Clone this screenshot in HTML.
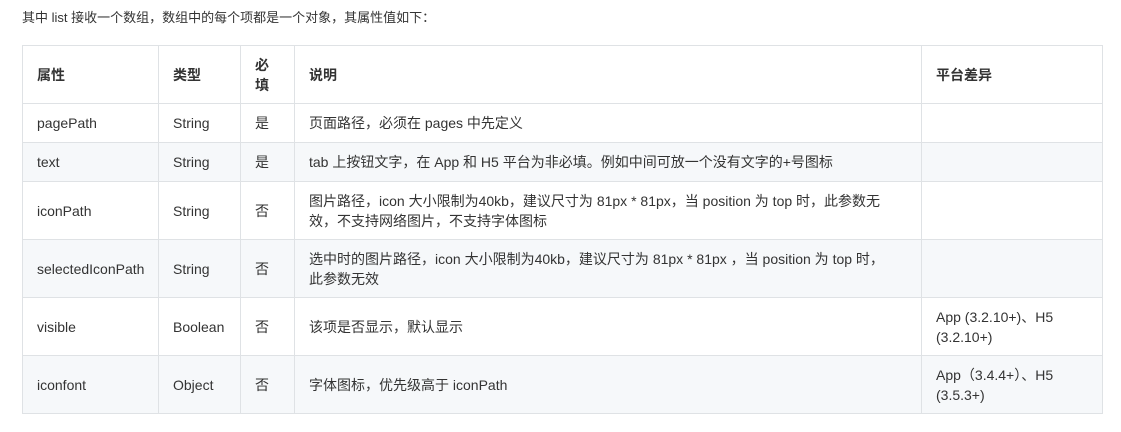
<!DOCTYPE html>
<html><head><meta charset="utf-8"><style>
body{margin:0;background:#fff;font-family:"Liberation Sans","Noto Sans CJK SC",sans-serif;font-size:13px;color:#333;}
p{position:absolute;left:22px;top:8px;margin:0;line-height:20px;}
table{position:absolute;left:22px;top:45px;border-collapse:collapse;table-layout:fixed;width:1080px;font-size:14px;}
td,th{border:1px solid #dfe2e5;padding:0 14px;line-height:20px;text-align:left;vertical-align:middle;overflow:hidden;white-space:nowrap;}
th{font-weight:bold;height:57px;}
tr.g td{background:#f6f8fa;}
tr.s td{height:38px;}
tr.d td{height:57px;}
</style></head><body>
<p>其中 list 接收一个数组，数组中的每个项都是一个对象，其属性值如下：</p>
<table>
<colgroup><col style="width:136px"><col style="width:82px"><col style="width:54px"><col style="width:627px"><col style="width:181px"></colgroup>
<tr><th>属性</th><th>类型</th><th>必<br>填</th><th>说明</th><th>平台差异</th></tr>
<tr class="s"><td>pagePath</td><td>String</td><td>是</td><td>页面路径，必须在 pages 中先定义</td><td></td></tr>
<tr class="s g"><td>text</td><td>String</td><td>是</td><td>tab 上按钮文字，在 App 和 H5 平台为非必填。例如中间可放一个没有文字的+号图标</td><td></td></tr>
<tr class="d"><td>iconPath</td><td>String</td><td>否</td><td>图片路径，icon 大小限制为40kb，建议尺寸为 81px * 81px，当 position 为 top 时，此参数无<br>效，不支持网络图片，不支持字体图标</td><td></td></tr>
<tr class="d g"><td>selectedIconPath</td><td>String</td><td>否</td><td>选中时的图片路径，icon 大小限制为40kb，建议尺寸为 81px * 81px ，当 position 为 top 时，<br>此参数无效</td><td></td></tr>
<tr class="d"><td>visible</td><td>Boolean</td><td>否</td><td>该项是否显示，默认显示</td><td>App (3.2.10+)、H5<br>(3.2.10+)</td></tr>
<tr class="d g"><td>iconfont</td><td>Object</td><td>否</td><td>字体图标，优先级高于 iconPath</td><td>App（3.4.4+）、H5<br>(3.5.3+)</td></tr>
</table>
</body></html>
